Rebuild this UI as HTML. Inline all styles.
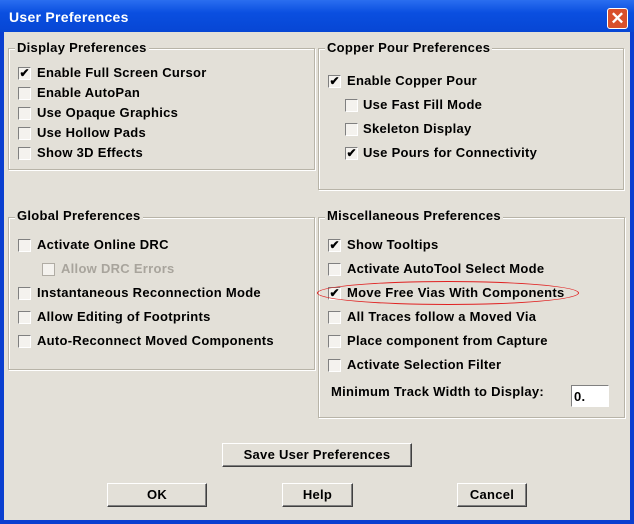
<!DOCTYPE html>
<html><head><style>
*{margin:0;padding:0;box-sizing:border-box}
body{width:634px;height:524px;overflow:hidden;background:#0a3fd0;font-family:"Liberation Sans",sans-serif;font-weight:bold;font-size:13px;color:#000;position:relative;letter-spacing:0.28px}
.title{position:absolute;left:0;top:0;width:634px;height:32px;background:linear-gradient(#2a6ef0,#0a4fe0 40%,#0746d4);}
.title span{position:absolute;left:9px;top:9px;color:#fff;font-size:14px}
.close{position:absolute;left:607px;top:8px;width:21px;height:21px;border:1px solid #fff;border-radius:3px;background:#d8502c;color:#fff;font-size:17px;line-height:19px;text-align:center;letter-spacing:0}
.client{position:absolute;left:4px;top:32px;width:626px;height:488px;background:#e3e0d8}
.a{position:absolute;white-space:nowrap}
.grp{position:absolute;border:1px solid #b8b4a8;box-shadow:inset 1px 1px 0 #fff,1px 1px 0 #fff}
.gt{position:absolute;background:#e3e0d8;padding:0 2px;white-space:nowrap}
.cb{position:absolute;width:13px;height:13px;border-top:1px solid #808080;border-left:1px solid #808080;border-right:1px solid #fff;border-bottom:1px solid #fff;background:#f4f2ee;font-size:12px;line-height:11px;text-align:center;letter-spacing:0}
.dis{color:#a8a49c}
.btn{position:absolute;border:1px solid;border-color:#fff #404040 #404040 #fff;box-shadow:inset -1px -1px 0 #808080;background:#e3e0d8;text-align:center;line-height:22px}
</style></head><body>
<div class="title"><span>User Preferences</span><div class="close">✕</div></div>
<div class="client"></div>

<div class="grp" style="left:8px;top:48px;width:307px;height:122px"></div>
<div class="gt" style="left:15px;top:40px">Display Preferences</div>
<div class="grp" style="left:318px;top:48px;width:306px;height:142px"></div>
<div class="gt" style="left:325px;top:40px">Copper Pour Preferences</div>
<div class="grp" style="left:8px;top:217px;width:307px;height:153px"></div>
<div class="gt" style="left:15px;top:208px">Global Preferences</div>
<div class="grp" style="left:318px;top:217px;width:307px;height:201px"></div>
<div class="gt" style="left:325px;top:208px">Miscellaneous Preferences</div>

<div class="cb" style="left:18px;top:67px">✔</div><div class="a" style="left:37px;top:65px">Enable Full Screen Cursor</div>
<div class="cb" style="left:18px;top:87px"></div><div class="a" style="left:37px;top:85px">Enable AutoPan</div>
<div class="cb" style="left:18px;top:107px"></div><div class="a" style="left:37px;top:105px">Use Opaque Graphics</div>
<div class="cb" style="left:18px;top:127px"></div><div class="a" style="left:37px;top:125px">Use Hollow Pads</div>
<div class="cb" style="left:18px;top:147px"></div><div class="a" style="left:37px;top:145px">Show 3D Effects</div>

<div class="cb" style="left:328px;top:75px">✔</div><div class="a" style="left:347px;top:73px">Enable Copper Pour</div>
<div class="cb" style="left:345px;top:99px"></div><div class="a" style="left:363px;top:97px">Use Fast Fill Mode</div>
<div class="cb" style="left:345px;top:123px"></div><div class="a" style="left:363px;top:121px">Skeleton Display</div>
<div class="cb" style="left:345px;top:147px">✔</div><div class="a" style="left:363px;top:145px">Use Pours for Connectivity</div>

<div class="cb" style="left:18px;top:239px"></div><div class="a" style="left:37px;top:237px">Activate Online DRC</div>
<div class="cb" style="left:42px;top:263px;border-color:#b0aca4"></div><div class="a dis" style="left:61px;top:261px">Allow DRC Errors</div>
<div class="cb" style="left:18px;top:287px"></div><div class="a" style="left:37px;top:285px">Instantaneous Reconnection Mode</div>
<div class="cb" style="left:18px;top:311px"></div><div class="a" style="left:37px;top:309px">Allow Editing of Footprints</div>
<div class="cb" style="left:18px;top:335px"></div><div class="a" style="left:37px;top:333px">Auto-Reconnect Moved Components</div>

<div class="cb" style="left:328px;top:239px">✔</div><div class="a" style="left:347px;top:237px">Show Tooltips</div>
<div class="cb" style="left:328px;top:263px"></div><div class="a" style="left:347px;top:261px">Activate AutoTool Select Mode</div>
<div class="cb" style="left:328px;top:287px">✔</div><div class="a" style="left:347px;top:285px">Move Free Vias With Components</div>
<div class="a" style="left:317px;top:281px;width:262px;height:24px;border:1px solid #e02020;border-radius:50%"></div>
<div class="cb" style="left:328px;top:311px"></div><div class="a" style="left:347px;top:309px">All Traces follow a Moved Via</div>
<div class="cb" style="left:328px;top:335px"></div><div class="a" style="left:347px;top:333px">Place component from Capture</div>
<div class="cb" style="left:328px;top:359px"></div><div class="a" style="left:347px;top:357px">Activate Selection Filter</div>
<div class="a" style="left:331px;top:384px">Minimum Track Width to Display:</div>
<div class="a" style="left:571px;top:385px;width:38px;height:22px;border:1px solid;border-color:#808080 #fff #fff #808080;background:#fff;padding:3px 2px">0.</div>

<div class="btn" style="left:222px;top:443px;width:190px;height:24px">Save User Preferences</div>
<div class="btn" style="left:107px;top:483px;width:100px;height:24px">OK</div>
<div class="btn" style="left:282px;top:483px;width:71px;height:24px">Help</div>
<div class="btn" style="left:457px;top:483px;width:70px;height:24px">Cancel</div>
</body></html>
